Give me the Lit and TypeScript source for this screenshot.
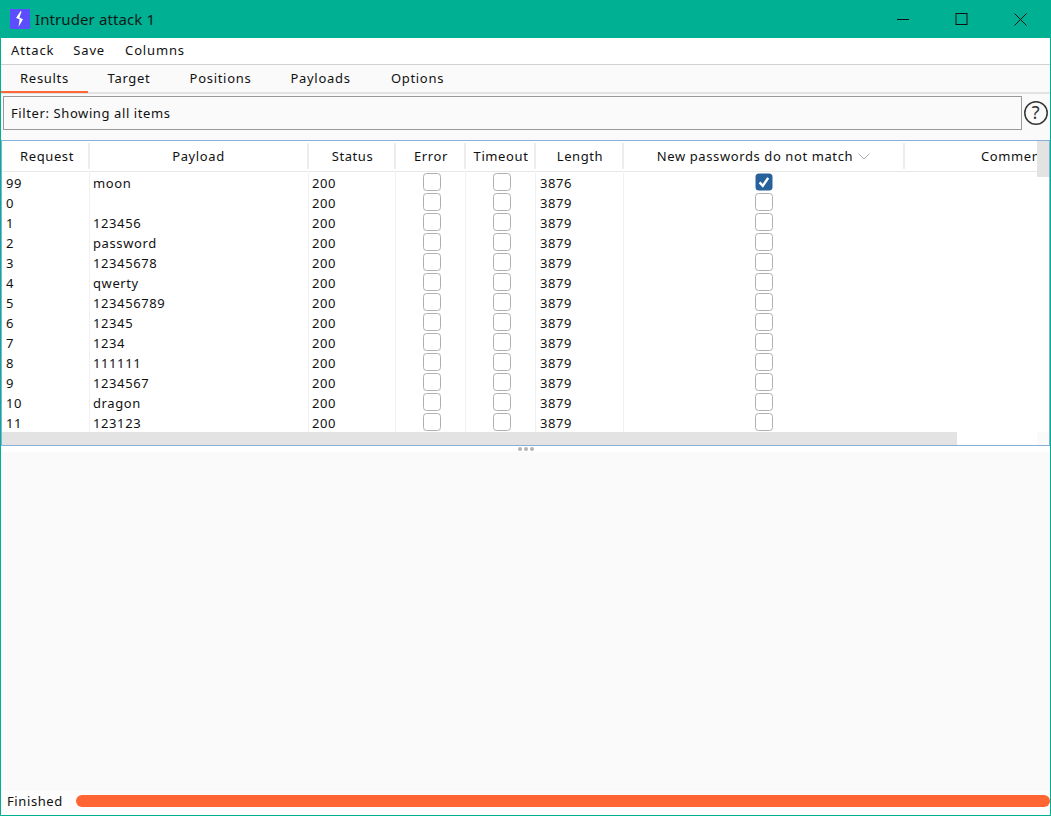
import { LitElement, html, css } from "lit";
import { customElement } from "lit/decorators.js";

const rows: [string, string, string, string, boolean][] = [
  ["99", "moon", "200", "3876", true],
  ["0", "", "200", "3879", false],
  ["1", "123456", "200", "3879", false],
  ["2", "password", "200", "3879", false],
  ["3", "12345678", "200", "3879", false],
  ["4", "qwerty", "200", "3879", false],
  ["5", "123456789", "200", "3879", false],
  ["6", "12345", "200", "3879", false],
  ["7", "1234", "200", "3879", false],
  ["8", "111111", "200", "3879", false],
  ["9", "1234567", "200", "3879", false],
  ["10", "dragon", "200", "3879", false],
  ["11", "123123", "200", "3879", false],
];

@customElement("app-root")
export class AppRoot extends LitElement {
  static styles = css`
    :host {
      display: block;
      width: 1051px;
      height: 816px;
      font-family: "Noto Sans", "Open Sans", sans-serif;
      font-size: 13px;
      letter-spacing: 0.6px;
      color: #111;
    }
    .win {
      box-sizing: border-box;
      width: 1051px;
      height: 816px;
      display: flex;
      flex-direction: column;
      border: 1px solid #00b092;
      border-top: 0;
      background: #fafafa;
      overflow: hidden;
    }
    .title {
      height: 38px;
      margin: 0 -1px;
      background: #00b092;
      display: flex;
      align-items: center;
      padding-left: 10px;
      flex: none;
    }
    .logo { width: 20px; height: 20px; display: block; }
    .title-text { margin-left: 5px; font-size: 15px; letter-spacing: 0.1px; color: #0b1a16; }
    .controls { margin-left: auto; display: flex; padding-right: 1px; }
    .ctl { width: 58px; height: 38px; display: flex; align-items: center; justify-content: center; }
    .ctl.close { width: 60px; }
    .ctl svg { display: block; }
    .menu {
      background: #fff;
      border-bottom: 1px solid #d2d2d2;
      display: flex;
      align-items: center;
      flex: none;
      padding: 0 0 2px 10px;
      box-sizing: content-box;
      height: 24px;
      gap: 19px;
      letter-spacing: 0.85px;
    }
    .menu span:last-child { margin-left: 1px; }
    .tabs {
      height: 27px;
      display: flex;
      flex: none;
      border-bottom: 2px solid #e2e2e2;
      background: #fafafa;
    }
    .tab {
      height: 28px;
      box-sizing: border-box;
      padding-top: 4px;
      text-align: center;
      letter-spacing: 0.7px;
    }
    .tab.active { border-bottom: 2px solid #ff6633; }
    .filter-row {
      display: flex;
      align-items: center;
      height: 46px;
      flex: none;
      padding: 1px 0 10px 2px;
      box-sizing: border-box;
    }
    .filter {
      width: 1019px;
      height: 34px;
      box-sizing: border-box;
      border: 1px solid #999;
      padding-left: 7px;
      display: flex;
      align-items: center;
      background: #fafafa;
    }
    .help { margin-left: 1px; display: block; }
    .table {
      height: 306px;
      box-sizing: border-box;
      flex: none;
      border: 1px solid #86b0d8;
      background: #fff;
      position: relative;
      overflow: hidden;
    }
    .head, .row {
      display: grid;
      grid-template-columns: 88px 219px 87px 70px 70px 88px 281px 140px;
      width: 1043px;
    }
    .head {
      height: 31px;
      border-bottom: 1px solid #e8e8e8;
      box-sizing: border-box;
      background: #fff;
      padding-top: 2px;
    }
    .hc {
      height: 26px;
      display: flex;
      align-items: center;
      justify-content: center;
      border-right: 2px solid #ededed;
      box-sizing: border-box;
      white-space: nowrap;
      padding-left: 2px;
    }
    .hc:first-child { padding-left: 4px; }
    .hc:nth-child(2), .hc:nth-child(7) { padding-left: 0; }
    .hc.last { border-right: 0; justify-content: flex-start; padding-left: 76px; }
    .chev { margin-left: 5px; display: block; }
    .body { padding-top: 1px; }
    .row { height: 20px; }
    .c {
      height: 20px;
      display: flex;
      align-items: center;
      padding-left: 4px;
      border-right: 1px solid #f0f0f0;
      box-sizing: border-box;
      white-space: nowrap;
    }
    .c.pay { padding-left: 3px; }
    .c.st { padding-left: 3px; }
    .c.center { justify-content: center; padding-left: 2px; }
    .c.center.plain { padding-left: 0; padding-right: 1px; }
    .c.plain { border-right: 0; }
    .box {
      width: 18px;
      height: 18px;
      box-sizing: border-box;
      border: 1.5px solid #b0b0b0;
      border-radius: 3.5px;
      background: #fff;
      display: block;
      margin-bottom: 2px;
    }
    .check { width: 18px; height: 18px; display: block; margin-bottom: 2px; }
    .vbar {
      position: absolute;
      left: 1035px;
      top: 0;
      width: 12px;
      height: 36px;
      background: #e3e3e3;
    }
    .hbar {
      position: absolute;
      left: 0;
      bottom: 0;
      width: 955px;
      height: 13px;
      background: #e3e3e3;
    }
    .corner {
      position: absolute;
      left: 1035px;
      bottom: 0;
      width: 12px;
      height: 13px;
      background: #fafafa;
    }
    .split {
      height: 6px;
      background: #fff;
      flex: none;
      display: flex;
      align-items: center;
      justify-content: center;
      gap: 2px;
    }
    .dot { width: 4px; height: 4px; border-radius: 50%; background: #b4b4b4; }
    .lower { flex: 1; background: #fafafa; }
    .status {
      height: 24px;
      flex: none;
      display: flex;
      align-items: center;
      background: #fdfdfd;
      padding: 0 0 4px 6px;
      box-sizing: border-box;
    }
    .progress {
      margin-left: 13px;
      width: 975px;
      height: 12px;
      background: #ff6633;
      border-radius: 6px;
    }
  `;

  private tabs: [string, number][] = [
    ["Results", 87], ["Target", 82], ["Positions", 101], ["Payloads", 99], ["Options", 95],
  ];
  private head: [string, boolean][] = [
    ["Request", false], ["Payload", false], ["Status", false], ["Error", false],
    ["Timeout", false], ["Length", false], ["New passwords do not match", true],
  ];

  private box(checked = false) {
    if (!checked) return html`<span class="box"></span>`;
    return html`<svg class="check" viewBox="0 0 18 18">
      <rect x="0.5" y="0.5" width="17" height="17" rx="3.5" fill="#26619c"/>
      <path d="M4.6 9.4 L7.8 12.8 L13.2 4.8" fill="none" stroke="#fff" stroke-width="2.4"/>
    </svg>`;
  }

  render() {
    return html`<div class="win">
      <div class="title">
        <svg class="logo" viewBox="0 0 20 20">
          <rect width="20" height="20" fill="#5c4dff"/>
          <path d="M10.5 2.2 L6 9 L9.6 10.2 L8.6 17.8 L13 10.2 L9.4 8.6 L11.6 2.6 Z" fill="#fff"/>
        </svg>
        <span class="title-text">Intruder attack 1</span>
        <div class="controls">
          <div class="ctl"><svg width="13" height="13" viewBox="0 0 13 13"><path d="M0 6.5H12" stroke="#111" fill="none"/></svg></div>
          <div class="ctl"><svg width="13" height="13" viewBox="0 0 13 13"><rect x="1" y="0.5" width="11" height="11" stroke="#111" fill="none"/></svg></div>
          <div class="ctl close"><svg width="13" height="13" viewBox="0 0 13 13"><path d="M0.5 0.5L12.5 12.5M12.5 0.5L0.5 12.5" stroke="#111" fill="none"/></svg></div>
        </div>
      </div>
      <div class="menu"><span>Attack</span><span>Save</span><span>Columns</span></div>
      <div class="tabs">
        ${this.tabs.map(([t, w], i) => html`<div class="tab ${i === 0 ? "active" : ""}" style="width:${w}px">${t}</div>`)}
      </div>
      <div class="filter-row">
        <div class="filter">Filter: Showing all items</div>
        <svg class="help" width="26" height="26" viewBox="0 0 26 26">
          <circle cx="13" cy="13" r="11.2" fill="none" stroke="#333" stroke-width="1.5"/>
          <text x="13" y="19" text-anchor="middle" font-size="18" fill="#333" font-family="Noto Sans">?</text>
        </svg>
      </div>
      <div class="table">
        <div class="head">
          ${this.head.map(([t, chev]) => html`<div class="hc">${t}${chev ? html`<svg class="chev" width="12" height="7" viewBox="0 0 12 7"><path d="M0.5 0.5L6 6L11.5 0.5" fill="none" stroke="#aaa"/></svg>` : ""}</div>`)}
          <div class="hc last">Comment</div>
        </div>
        <div class="body">
          ${rows.map(([id, p, s, l, chk]) => html`<div class="row">
            <div class="c">${id}</div>
            <div class="c pay">${p}</div>
            <div class="c st">${s}</div>
            <div class="c center">${this.box()}</div>
            <div class="c center">${this.box()}</div>
            <div class="c">${l}</div>
            <div class="c center plain">${this.box(chk)}</div>
            <div class="c plain"></div>
          </div>`)}
        </div>
        <div class="vbar"></div>
        <div class="hbar"></div>
        <div class="corner"></div>
      </div>
      <div class="split"><i class="dot"></i><i class="dot"></i><i class="dot"></i></div>
      <div class="lower"></div>
      <div class="status">
        <span>Finished</span>
        <div class="progress"></div>
      </div>
    </div>`;
  }
}
